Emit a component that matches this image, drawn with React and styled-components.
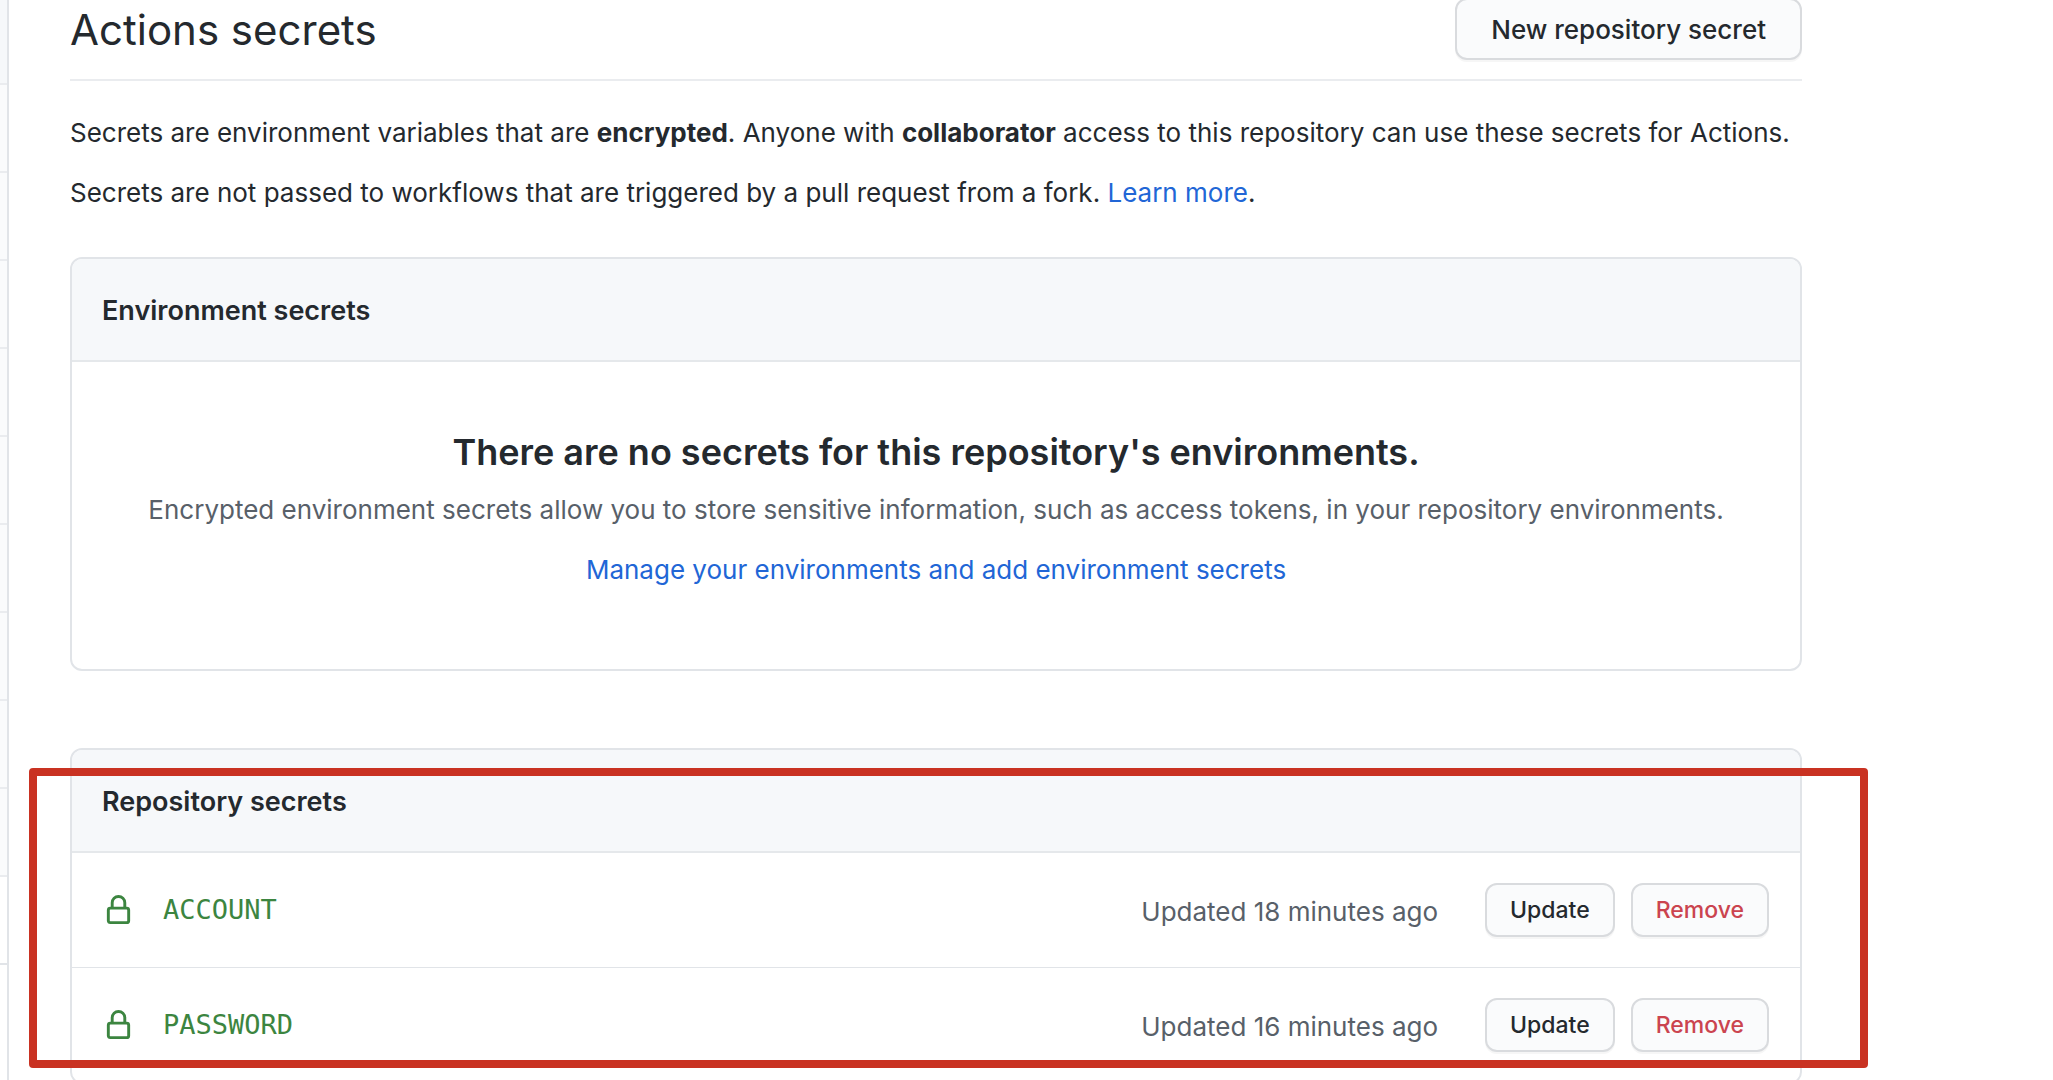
import React from 'react';
import styled, { createGlobalStyle } from 'styled-components';


/* ---------------------------------------------------------------------
 — "GlobalStyle" —

 page reset, base font and text color
----------------------------------------------------------------------*/
const GlobalStyle = createGlobalStyle`
    * {
        box-sizing: border-box;
    }
    html, body {
        margin: 0;
        height: 100%;
        overflow: hidden;
    }
    body {
        background-color: #ffffff;
        color: #24292e;
        font-family: Inter, "Liberation Sans", sans-serif;
        font-size: 26px;
        line-height: 40px;
    }
`;


const Page = styled.div`
    display: flex;
    align-items: stretch;
    min-height: 100vh;
`;


/* ---------------------------------------------------------------------
 — "SideMenu" —

 the settings menu, only its right edge remains in view
----------------------------------------------------------------------*/
const SideMenu = styled.aside`
    flex: 0 0 9px;
    border-right: 2px solid #e1e4e8;
`;

const SideMenuItem = styled.div`
    height: ${props => (props.$first ? '85px' : '88px')};
    border-bottom: 2px solid ${props => (props.$last ? '#e1e4e8' : '#eaecef')};
    background-color: ${props => props.$background || '#fafbfc'};
`;


const Main = styled.main`
    flex: 1;
    min-width: 0;
    padding: 0 251px 0 61px;
`;


/* ---------------------------------------------------------------------
 — "Subhead" —

 page title with its action on the right, the button is a bit taller
 than the bar and grows from the bottom
----------------------------------------------------------------------*/
const Subhead = styled.header`
    display: flex;
    justify-content: space-between;
    align-items: flex-end;
    height: 81px;
    padding-bottom: 19px;
    border-bottom: 2px solid #eaecef;
`;

const Title = styled.h1`
    margin: 0;
    font-size: 42px;
    font-weight: 400;
    line-height: 60px;
`;

const Button = styled.button`
    height: ${props => (props.$large ? '62px' : '54px')};
    padding: 0 ${props => (props.$large ? '34px' : '23px')};
    border: 2px solid #d9dbde;
    border-radius: 12px;
    background-color: #fafbfc;
    box-shadow: 0 2px 0 rgba(27, 31, 35, 0.04);
    color: ${props => (props.$danger ? '#cb444f' : '#24292e')};
    font-family: inherit;
    font-size: ${props => (props.$large ? '26px' : '23px')};
    font-weight: 500;
    white-space: nowrap;
    cursor: pointer;
`;

const Intro = styled.p`
    margin: 0 0 20px;
    white-space: nowrap;
`;

const IntroBlock = styled.section`
    padding: 32px 0 24px;
`;

const Anchor = styled.a`
    color: #2166d6;
    text-decoration: none;
`;


/* ---------------------------------------------------------------------
 — "Box" —

 bordered panel with a gray header
----------------------------------------------------------------------*/
const Box = styled.section`
    position: relative;
    border: 2px solid #e1e4e8;
    border-radius: 12px;

    & + & {
        margin-top: 77px;
    }
`;

const BoxHeader = styled.header`
    padding: 32px 30px 29px;
    border-bottom: 2px solid #e5e8eb;
    border-radius: 10px 10px 0 0;
    background-color: #f6f8fa;
`;

const BoxTitle = styled.h3`
    margin: 0;
    font-size: 27px;
    font-weight: 600;
    line-height: 40px;
`;

const Blankslate = styled.div`
    padding: 62px 56px 79px;
    text-align: center;
`;

const BlankslateTitle = styled.h3`
    margin: 0 0 10px;
    font-size: 36px;
    font-weight: 600;
    line-height: 56px;
`;

const BlankslateText = styled.p`
    margin: 0 0 20px;
    color: #586069;
    white-space: nowrap;
`;


/* ---------------------------------------------------------------------
 — "SecretRow" —

 renders a "li" element: lock, name, last update and the two actions.

 expected props:

 + name: name of the secret
 + updated: text telling the last update
----------------------------------------------------------------------*/
const SecretList = styled.ul`
    margin: 0;
    padding: 0;
    list-style: none;
`;

const Row = styled.li`
    display: flex;
    align-items: center;
    padding: 30px 31px;

    & + & {
        border-top: 1px solid #e1e4e8;
    }
`;

const LockIcon = styled.svg`
    width: 31px;
    height: 31px;
    margin-right: 29px;
    fill: #3c8540;
`;

const SecretName = styled.code`
    flex: 1;
    color: #3c8540;
    font-family: "DejaVu Sans Mono", monospace;
    font-size: 27px;
`;

const Updated = styled.span`
    margin-right: 47px;
    padding-top: 4px;
    color: #586069;
`;

const Actions = styled.div`
    display: flex;
    gap: 16px;
`;

const SecretRow = ({ name, updated }) => (
    <Row>
      <LockIcon viewBox="0 0 16 16" aria-hidden="true">
        <path
          fillRule="evenodd"
          d="M4 4v2h-.25A1.75 1.75 0 002 7.75v5.5c0 .966.784 1.75 1.75 1.75h8.5A1.75 1.75 0 0014 13.25v-5.5A1.75 1.75 0 0012.25 6H12V4a4 4 0 10-8 0zm6.5 2V4a2.5 2.5 0 10-5 0v2h5zM12 7.5h.25a.25.25 0 01.25.25v5.5a.25.25 0 01-.25.25h-8.5a.25.25 0 01-.25-.25v-5.5a.25.25 0 01.25-.25H12z"
        />
      </LockIcon>
      <SecretName>{name}</SecretName>
      <Updated>{updated}</Updated>
      <Actions>
        <Button type="button">Update</Button>
        <Button type="button" $danger>Remove</Button>
      </Actions>
    </Row>
);


// red frame laid over the repository secrets
const Highlight = styled.div`
    position: absolute;
    top: 18px;
    right: -68px;
    bottom: 14px;
    left: -43px;
    border: 8px solid #c93222;
    border-radius: 4px;
    pointer-events: none;
`;


const menuItems = [
    { id: 1, $first: true, $background: '#f6f8fa' },
    { id: 2 }, { id: 3 }, { id: 4 }, { id: 5 }, { id: 6 },
    { id: 7 }, { id: 8 }, { id: 9 }, { id: 10 },
    { id: 11, $last: true, $background: '#ffffff' }
];

const secrets = [
    { name: 'ACCOUNT', updated: 'Updated 18 minutes ago' },
    { name: 'PASSWORD', updated: 'Updated 16 minutes ago' }
];


const App = () => (
    <Page>
      <GlobalStyle />
      <SideMenu>
        {menuItems.map(({ id, ...item }) => <SideMenuItem key={id} {...item} />)}
      </SideMenu>
      <Main>
        <Subhead>
          <Title>Actions secrets</Title>
          <Button type="button" $large>New repository secret</Button>
        </Subhead>
        <IntroBlock>
          <Intro>
            Secrets are environment variables that are <b>encrypted</b>. Anyone
            with <b>collaborator</b> access to this repository can use these
            secrets for Actions.
          </Intro>
          <Intro>
            Secrets are not passed to workflows that are triggered by a pull
            request from a fork. <Anchor href="#learn-more">Learn more</Anchor>.
          </Intro>
        </IntroBlock>
        <Box>
          <BoxHeader>
            <BoxTitle>Environment secrets</BoxTitle>
          </BoxHeader>
          <Blankslate>
            <BlankslateTitle>
              There are no secrets for this repository's environments.
            </BlankslateTitle>
            <BlankslateText>
              Encrypted environment secrets allow you to store sensitive
              information, such as access tokens, in your repository
              environments.
            </BlankslateText>
            <Anchor href="#environments">
              Manage your environments and add environment secrets
            </Anchor>
          </Blankslate>
        </Box>
        <Box>
          <BoxHeader>
            <BoxTitle>Repository secrets</BoxTitle>
          </BoxHeader>
          <SecretList>
            {secrets.map(secret => <SecretRow key={secret.name} {...secret} />)}
          </SecretList>
          <Highlight />
        </Box>
      </Main>
    </Page>
);

export default App;
